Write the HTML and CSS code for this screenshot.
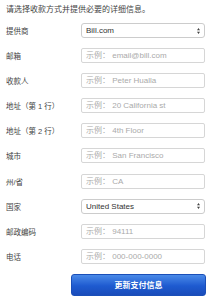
FILE: index.html
```html
<!DOCTYPE html>
<html lang="zh-CN">
<head>
    <meta charset="UTF-8">
    <meta name="viewport" content="width=device-width, initial-scale=1.0">
    <title>支付信息</title>
    <link rel="stylesheet" href="styles.css">
</head>
<body>
    <div class="payment-form">
        <p class="intro">请选择收款方式并提供必要的详细信息。</p>
        <div class="form-grid">
            <label for="provider">提供商</label>
            <select id="provider" class="field">
                <option>Bill.com</option>
            </select>

            <label for="email">邮箱</label>
            <input id="email" class="field" type="text" placeholder="示例： email@bill.com">

            <label for="payee">收款人</label>
            <input id="payee" class="field" type="text" placeholder="示例： Peter Hualla">

            <label for="addr1">地址（第 1 行）</label>
            <input id="addr1" class="field" type="text" placeholder="示例： 20 California st">

            <label for="addr2">地址（第 2 行）</label>
            <input id="addr2" class="field" type="text" placeholder="示例： 4th Floor">

            <label for="city">城市</label>
            <input id="city" class="field" type="text" placeholder="示例： San Francisco">

            <label for="state">州/省</label>
            <input id="state" class="field" type="text" placeholder="示例： CA">

            <label for="country">国家</label>
            <select id="country" class="field">
                <option>United States</option>
            </select>

            <label for="zip">邮政编码</label>
            <input id="zip" class="field" type="text" placeholder="示例： 94111">

            <label for="phone">电话</label>
            <input id="phone" class="field" type="text" placeholder="示例： 000-000-0000">
        </div>
        <div class="actions">
            <button class="submit-btn">更新支付信息</button>
        </div>
    </div>
</body>
</html>
```

FILE: styles.css
```css
body {
    margin: 0;
    background-color: #fff;
    color: #333;
    font-family: "Liberation Sans", "Noto Sans CJK SC", sans-serif;
}

.payment-form {
    padding: 4px 13px 0 6px;
}

.intro {
    margin: 0 0 7px 0;
    font-size: 8px;
    line-height: 12px;
    color: #444;
}

.form-grid {
    display: grid;
    grid-template-columns: 75px 1fr;
    row-gap: 10.1px;
    align-items: center;
}

.form-grid label {
    font-size: 7.5px;
    color: #444;
}

.field {
    box-sizing: border-box;
    height: 15px;
    width: 100%;
    margin: 0;
    padding: 0 4px;
    border: 1px solid #d6d6d6;
    border-radius: 2px;
    background-color: #fff;
    font-family: inherit;
    font-size: 8px;
    color: #333;
    outline: none;
}

.field::placeholder {
    color: #aaa;
}

select.field {
    appearance: none;
    -webkit-appearance: none;
    border-radius: 3px;
    border-color: #ccc;
    background-image: url("data:image/svg+xml;utf8,<svg xmlns='http://www.w3.org/2000/svg' width='4' height='7'><path d='M2 0L4 2.6H0z M2 7L0 4.4H4z' fill='%23444'/></svg>");
    background-repeat: no-repeat;
    background-position: right 4px center;
    background-size: 3px 6px;
}

.actions {
    display: flex;
    justify-content: flex-end;
    margin-top: 10px;
    margin-right: -1px;
}

.submit-btn {
    width: 135px;
    height: 22px;
    border: 1px solid #1b4fb8;
    border-radius: 3px;
    background: linear-gradient(#4a8ae8, #1e5ad0 55%, #1a4cba);
    color: #fff;
    font-family: inherit;
    font-size: 8px;
    font-weight: bold;
    cursor: pointer;
}
```
